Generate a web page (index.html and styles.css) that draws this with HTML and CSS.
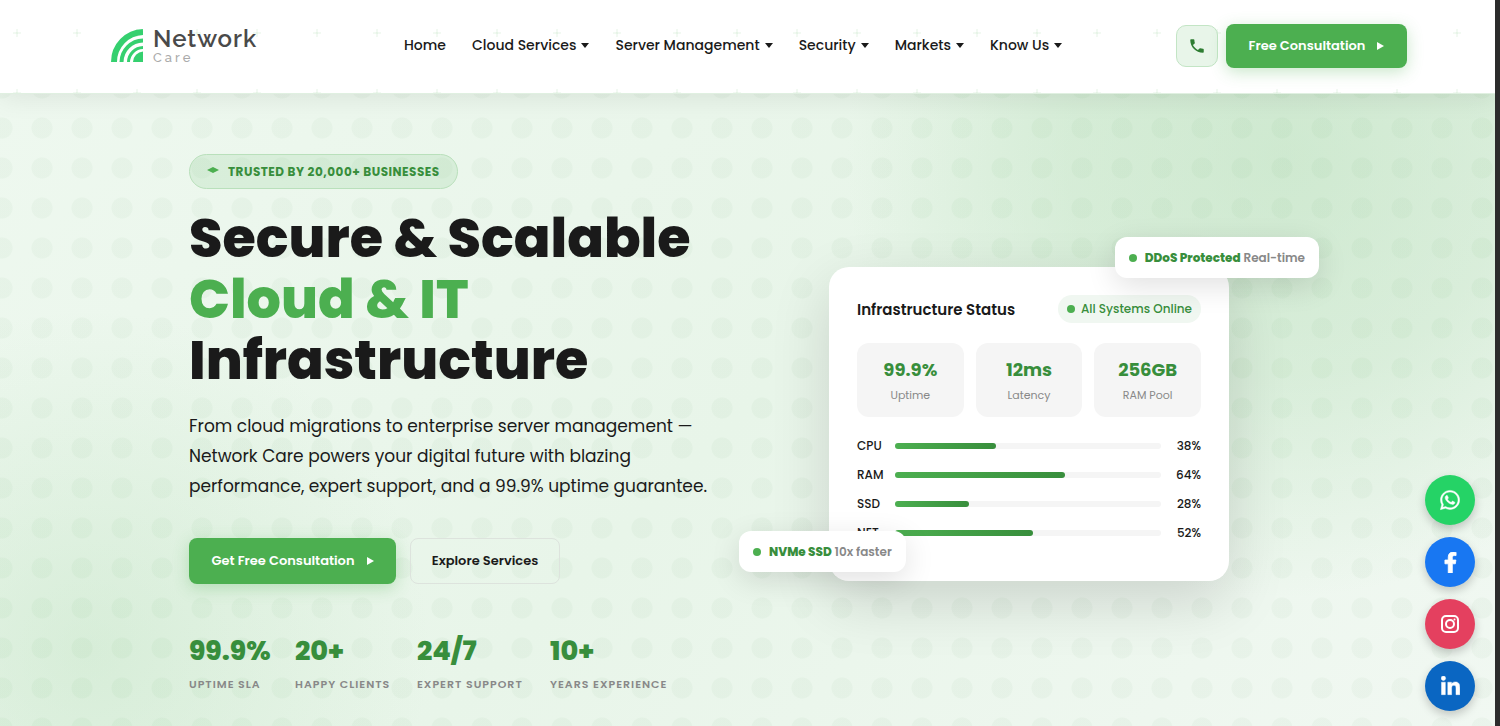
FILE: index.html
```html
<!DOCTYPE html>
<html lang="en">
  <head>
    <meta charset="UTF-8" />
    <meta name="viewport" content="width=device-width, initial-scale=1.0" />
    <link rel="stylesheet" href="styles.css">
    <title>Network Care</title>
  </head>
  <body>
    <!-- header -->
    <header class="header">
      <a class="logo" href="#">
        <svg class="logo-mark" viewBox="0 0 32 33" aria-hidden="true">
          <g fill="none" stroke="#35d06f">
            <path d="M3 33A30 30 0 0 1 32 3" stroke-width="6" />
            <path d="M10.500 33A22 22 0 0 1 32 11.500" stroke-width="4" />
            <path d="M17.500 33A15 15 0 0 1 32 18.500" stroke-width="3" />
          </g>
          <path d="M22 33A11 11 0 0 1 32 22.500V33Z" fill="#35d06f" />
        </svg>
        <span class="logo-text">
          <span class="logo-name">Network</span>
          <span class="logo-sub">Care</span>
        </span>
      </a>
      <nav class="nav">
        <a href="#">Home</a>
        <a class="has-menu" href="#">Cloud Services</a>
        <a class="has-menu" href="#">Server Management</a>
        <a class="has-menu" href="#">Security</a>
        <a class="has-menu" href="#">Markets</a>
        <a class="has-menu" href="#">Know Us</a>
      </nav>
      <div class="actions">
        <a class="phone" href="#" aria-label="Call us">
          <svg viewBox="0 0 24 24" width="18" height="18" fill="#2e7d32"><path d="M6.600 10.800c1.400 2.800 3.800 5.100 6.600 6.600l2.200-2.200c.3-.3.700-.4 1-.2 1.100.4 2.300.6 3.600.6.600 0 1 .4 1 1V20c0 .6-.4 1-1 1C10.600 21 3 13.400 3 4c0-.6.4-1 1-1h3.500c.6 0 1 .4 1 1 0 1.200.2 2.500.6 3.600.1.300 0 .7-.2 1z" /></svg>
        </a>
        <button class="btn btn-primary btn-header">Free Consultation <span class="arrow"></span></button>
      </div>
    </header>

    <!-- hero -->
    <main class="hero">
      <section class="intro">
        <div class="badge">
          <svg viewBox="0 0 12 12" width="12" height="12" aria-hidden="true"><path d="M0 4L6 1L12 4L6 7Z" fill="#4caf50" /></svg>
          <span>TRUSTED BY 20,000+ BUSINESSES</span>
        </div>
        <h1>Secure &amp; Scalable <span class="green">Cloud &amp; IT</span> Infrastructure</h1>
        <p class="lead">From cloud migrations to enterprise server management — Network Care powers your digital future with blazing performance, expert support, and a 99.9% uptime guarantee.</p>
        <div class="buttons">
          <button class="btn btn-primary btn-main">Get Free Consultation <span class="arrow"></span></button>
          <button class="btn btn-outline">Explore Services</button>
        </div>
        <div class="stats">
          <div class="stat"><strong>99.9%</strong><span>UPTIME SLA</span></div>
          <div class="stat"><strong>20+</strong><span>HAPPY CLIENTS</span></div>
          <div class="stat"><strong>24/7</strong><span>EXPERT SUPPORT</span></div>
          <div class="stat"><strong>10+</strong><span>YEARS EXPERIENCE</span></div>
        </div>
      </section>

      <section class="visual">
        <div class="card">
          <div class="card-head">
            <h2>Infrastructure Status</h2>
            <span class="online"><i class="dot"></i>All Systems Online</span>
          </div>
          <div class="tiles">
            <div class="tile"><strong>99.9%</strong><span>Uptime</span></div>
            <div class="tile"><strong>12ms</strong><span>Latency</span></div>
            <div class="tile"><strong>256GB</strong><span>RAM Pool</span></div>
          </div>
          <div class="bars">
            <div class="bar-row"><span>CPU</span><div class="track"><div class="fill" style="width: 38%"></div></div><span class="value">38%</span></div>
            <div class="bar-row"><span>RAM</span><div class="track"><div class="fill" style="width: 64%"></div></div><span class="value">64%</span></div>
            <div class="bar-row"><span>SSD</span><div class="track"><div class="fill" style="width: 28%"></div></div><span class="value">28%</span></div>
            <div class="bar-row"><span>NET</span><div class="track"><div class="fill" style="width: 52%"></div></div><span class="value">52%</span></div>
          </div>
        </div>
        <div class="float float-top"><i class="dot"></i><span><b>DDoS Protected</b> Real-time</span></div>
        <div class="float float-bottom"><i class="dot"></i><span><b>NVMe SSD</b> 10x faster</span></div>
      </section>
    </main>

    <!-- social buttons -->
    <div class="social">
      <a class="whatsapp" href="#" aria-label="WhatsApp">
        <svg viewBox="0 0 448 512" width="20" height="22" fill="#fff" stroke="#fff" stroke-width="10"><path d="M380.900 97.100C339 55.100 283.200 32 223.900 32c-122.400 0-222 99.600-222 222 0 39.100 10.200 77.300 29.600 111L0 480l117.700-30.900c32.400 17.700 68.900 27 106.100 27h.1c122.300 0 224.100-99.600 224.100-222 0-59.300-25.200-115-67.100-157zm-157 341.600c-33.200 0-65.700-8.900-94-25.700l-6.700-4-69.800 18.300L72 359.200l-4.400-7c-18.500-29.400-28.200-63.300-28.200-98.200 0-101.700 82.800-184.500 184.600-184.500 49.300 0 95.600 19.200 130.400 54.100 34.800 34.900 56.200 81.200 56.100 130.500 0 101.800-84.900 184.600-186.600 184.600zm101.200-138.200c-5.500-2.800-32.800-16.200-37.900-18-5.100-1.900-8.800-2.800-12.500 2.800-3.700 5.600-14.300 18-17.600 21.800-3.200 3.700-6.500 4.200-12 1.400-32.600-16.300-54-29.100-75.500-66-5.700-9.800 5.700-9.100 16.300-30.300 1.800-3.700.9-6.900-.5-9.700-1.400-2.800-12.500-30.100-17.100-41.200-4.500-10.800-9.100-9.300-12.500-9.500-3.200-.2-6.900-.2-10.600-.2-3.700 0-9.700 1.400-14.800 6.900-5.100 5.600-19.400 19-19.400 46.300 0 27.300 19.900 53.700 22.600 57.400 2.800 3.700 39.100 59.700 94.800 83.800 35.200 15.200 49 16.500 66.600 13.900 10.700-1.600 32.800-13.400 37.400-26.400 4.600-13 4.600-24.100 3.200-26.400-1.300-2.500-5-3.900-10.500-6.600z" /></svg>
      </a>
      <a class="facebook" href="#" aria-label="Facebook">
        <svg viewBox="0 0 320 512" width="13" height="21" fill="#fff" stroke="#fff" stroke-width="20"><path d="M279 288l14.200-92.700h-88.900v-60.100c0-25.300 12.400-50.100 52.200-50.100H297V6.300S260.400 0 225.400 0C152.200 0 104.300 44.400 104.300 124.700v70.600H22.900V288h81.400v224h100.200V288z" /></svg>
      </a>
      <a class="instagram" href="#" aria-label="Instagram">
        <svg viewBox="0 0 20 20" width="20" height="20" fill="none" stroke="#fff" stroke-width="2"><rect x="2" y="2" width="16" height="16" rx="4" /><circle cx="10" cy="10" r="4" /><circle cx="14.500" cy="5.500" r="1" fill="#fff" stroke="none" /></svg>
      </a>
      <a class="linkedin" href="#" aria-label="LinkedIn">
        <svg viewBox="0 0 448 480" width="19" height="20" fill="#fff" stroke="#fff" stroke-width="10"><path d="M100.300 448H7.400V148.900h92.900zM53.800 108.100C24.100 108.100 0 83.500 0 53.800a53.800 53.800 0 0 1 107.600 0c0 29.700-24.100 54.300-53.800 54.300zM447.900 448h-92.700V302.400c0-34.700-.7-79.200-48.300-79.200-48.300 0-55.700 37.700-55.700 76.700V448h-92.800V148.900h89.100v40.800h1.300c12.400-23.500 42.700-48.300 87.900-48.300 94 0 111.300 61.900 111.300 142.300V448z" /></svg>
      </a>
    </div>
  </body>
</html>
```
FILE: styles.css
```css
* {
  box-sizing: border-box;
}

body {
  margin: 0;
  min-height: 100vh;
  display: flex;
  flex-direction: column;
  font-family: Poppins, Inter, sans-serif;
  color: #1a1a1a;
  background-color: #eff7f0;
  border-right: 5px solid #2c2c2c;
}

a {
  color: inherit;
  text-decoration: none;
}

h1,
h2,
p {
  margin: 0;
}

/* header */
.header {
  height: 94px;
  padding: 0 88px 2px 111px;
  display: flex;
  align-items: center;
  background-color: white;
  /* faint plus signs */
  background-image:
    radial-gradient(ellipse 5px 1px, rgba(76, 175, 80, 0.07) 99%, transparent),
    radial-gradient(ellipse 1px 5px, rgba(76, 175, 80, 0.07) 99%, transparent);
  background-size: 60px 60px;
  background-position: -13px 3px;
  border-bottom: 1px solid #e0f0e1;
  box-shadow: 0 4px 24px rgba(0, 0, 0, 0.08);
  position: relative;
  z-index: 1;
}

.logo {
  display: flex;
  align-items: center;
  gap: 10px;
  width: 293px;
}

.logo-mark {
  width: 32px;
  height: 33px;
}

.logo-text {
  display: flex;
  flex-direction: column;
  font-family: Raleway, Lato, sans-serif;
}

.logo-name {
  font-size: 24px;
  line-height: 24px;
  font-weight: 600;
  letter-spacing: 1px;
  color: #4a4a4a;
}

.logo-sub {
  font-size: 13px;
  line-height: 14px;
  font-weight: 500;
  letter-spacing: 3px;
  color: #aaa;
}

.nav {
  display: flex;
  gap: 26px;
  font-size: 14px;
  font-weight: 500;
  white-space: nowrap;
}

.has-menu::after {
  content: "";
  display: inline-block;
  margin-left: 5px;
  vertical-align: 2px;
  border: 4px solid transparent;
  border-top: 5px solid #1a1a1a;
  border-bottom: 0;
}

.actions {
  display: flex;
  align-items: center;
  gap: 8px;
  margin-left: auto;
}

.phone {
  width: 42px;
  height: 42px;
  display: flex;
  align-items: center;
  justify-content: center;
  background-color: #e8f5e9;
  border: 1px solid #c3e5c5;
  border-radius: 10px;
}

.btn {
  display: flex;
  align-items: center;
  justify-content: center;
  gap: 12px;
  height: 46px;
  border-radius: 8px;
  font-family: inherit;
  font-size: 13px;
  font-weight: 600;
  white-space: nowrap;
  cursor: pointer;
}

.btn-primary {
  border: none;
  color: white;
  background-color: #4caf50;
  box-shadow: 0 4px 16px rgba(76, 175, 80, 0.3);
}

.btn-header {
  width: 181px;
  height: 44px;
}

.btn-main {
  width: 207px;
}

.btn-outline {
  width: 150px;
  border: 1px solid #dde3dd;
  color: #1a1a1a;
  background-color: transparent;
}

.arrow {
  border: 4px solid transparent;
  border-left: 7px solid white;
  border-right: 0;
}

/* hero */
.hero {
  flex: 1;
  display: grid;
  grid-template-columns: 525fr 580fr;
  gap: 25px;
  padding: 60px 176px 30px 189px;
  background-image:
    radial-gradient(circle, rgba(56, 142, 60, 0.04) 10px, transparent 11px),
    radial-gradient(circle 440px at 86% 10%, rgba(165, 214, 167, 0.4), rgba(165, 214, 167, 0.28) 50%, transparent),
    radial-gradient(circle 340px at 6% 88%, rgba(165, 214, 167, 0.28), transparent),
    linear-gradient(135deg, #eef8ef, #e8f5e9 50%, #f1f8f2);
  background-size: 40px 40px, auto, auto, auto;
  background-position: 22px 14px, 0 0, 0 0, 0 0;
}

.badge {
  display: inline-flex;
  align-items: center;
  gap: 9px;
  height: 35px;
  padding: 0 17px;
  font-size: 12px;
  font-weight: 700;
  letter-spacing: 0.5px;
  color: #388e3c;
  background-color: rgba(129, 199, 132, 0.18);
  border: 1px solid #b9e0bb;
  border-radius: 18px;
}

h1 {
  margin-top: 19px;
  font-size: 54px;
  line-height: 61px;
  font-weight: 800;
}

.green {
  display: block;
  color: #4caf50;
}

.lead {
  margin-top: 20px;
  font-size: 17px;
  line-height: 30px;
}

.buttons {
  display: flex;
  gap: 14px;
  margin-top: 37px;
}

.stats {
  display: grid;
  grid-template-columns: 82px 98px 109px auto;
  gap: 24px;
  margin-top: 49px;
}

.stat {
  display: flex;
  flex-direction: column;
  gap: 9px;
  white-space: nowrap;
}

.stat strong {
  font-size: 27px;
  line-height: 36px;
  font-weight: 800;
  color: #388e3c;
}

.stat span {
  font-size: 11px;
  line-height: 12px;
  font-weight: 600;
  letter-spacing: 1px;
  color: #888;
}

/* status card */
.visual {
  position: relative;
  align-self: start;
  margin-top: 113px;
}

.card {
  max-width: 400px;
  margin: 0 auto;
  padding: 28px 28px 39px;
  background-color: white;
  border-radius: 20px;
  box-shadow: 0 20px 60px rgba(0, 0, 0, 0.14);
}

.card-head {
  display: flex;
  align-items: center;
  justify-content: space-between;
}

h2 {
  font-size: 15px;
  font-weight: 600;
}

.dot {
  width: 8px;
  height: 8px;
  border-radius: 50%;
  background-color: #4caf50;
}

.online {
  display: flex;
  align-items: center;
  gap: 6px;
  height: 28px;
  padding: 0 9px;
  font-size: 12px;
  font-weight: 500;
  color: #388e3c;
  background-color: #f0f7f1;
  border-radius: 14px;
}

.tiles {
  display: grid;
  grid-template-columns: repeat(3, 1fr);
  gap: 12px;
  margin-top: 20px;
}

.tile {
  display: flex;
  flex-direction: column;
  align-items: center;
  gap: 4px;
  padding: 14px 0;
  background-color: #f5f5f5;
  border-radius: 12px;
}

.tile strong {
  font-size: 18px;
  line-height: 26px;
  font-weight: 700;
  color: #388e3c;
}

.tile span {
  font-size: 11px;
  line-height: 16px;
  color: #888;
}

.bars {
  display: grid;
  gap: 11px;
  margin-top: 20px;
}

.bar-row {
  display: grid;
  grid-template-columns: 38px 1fr 40px;
  align-items: center;
  font-size: 12px;
  line-height: 18px;
  font-weight: 500;
}

.value {
  text-align: right;
}

.track {
  height: 6px;
  background-color: #f5f5f5;
  border-radius: 3px;
}

.fill {
  height: 6px;
  border-radius: 3px;
  background-image: linear-gradient(90deg, #4caf50, #388e3c);
}

.float {
  position: absolute;
  display: flex;
  align-items: center;
  gap: 8px;
  height: 41px;
  padding: 0 14px;
  font-size: 12px;
  font-weight: 600;
  color: #888;
  white-space: nowrap;
  background-color: white;
  border-radius: 12px;
  box-shadow: 0 8px 30px rgba(0, 0, 0, 0.12);
}

.float b {
  font-weight: 800;
  color: #388e3c;
}

.float-top {
  top: -30px;
  right: 0;
}

.float-bottom {
  bottom: 9px;
  left: 0;
}

/* social buttons */
.social {
  position: fixed;
  right: 25px;
  bottom: 15px;
  display: flex;
  flex-direction: column;
  gap: 12px;
  z-index: 2;
}

.social a {
  width: 50px;
  height: 50px;
  display: flex;
  align-items: center;
  justify-content: center;
  border-radius: 50%;
  box-shadow: 0 4px 10px rgba(0, 0, 0, 0.2);
}

.whatsapp {
  background-color: #25d366;
}

.facebook {
  background-color: #1877f2;
}

.instagram {
  background-color: #e4405f;
}

.linkedin {
  background-color: #0a66c2;
}
```
